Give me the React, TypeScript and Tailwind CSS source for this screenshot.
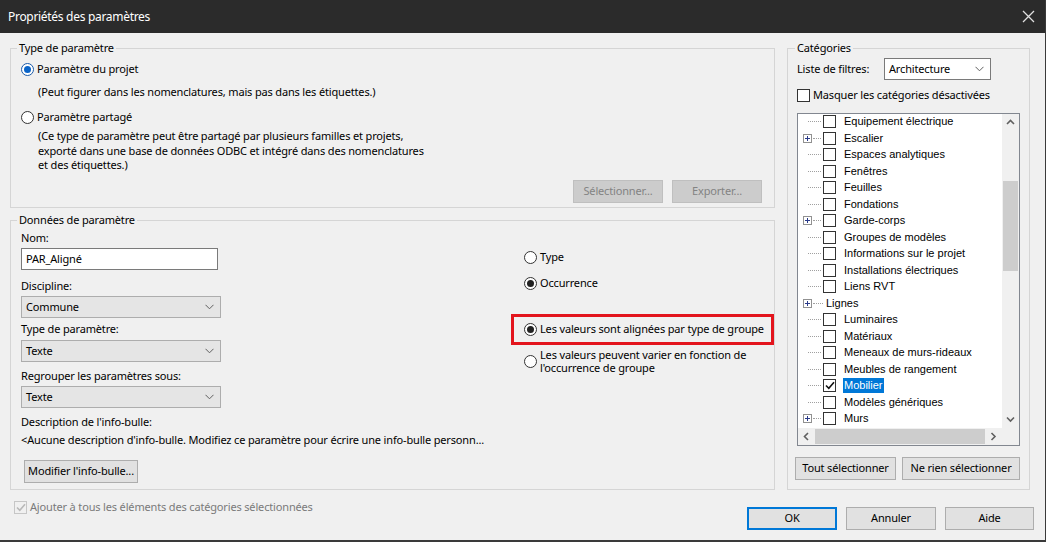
import React from 'react';

const ui = "font-['Noto_Sans',sans-serif] text-[11px] tracking-[-0.16px] text-black";

function Chevron({ className = '' }: { className?: string }) {
  return (
    <svg width="9" height="6" viewBox="0 0 9 6" className={className}>
      <polyline points="0.5,0.8 4.5,4.8 8.5,0.8" fill="none" stroke="#606060" strokeWidth="1" />
    </svg>
  );
}

function Radio({ checked, blue }: { checked?: boolean; blue?: boolean }) {
  return (
    <span
      className={`flex h-[13px] w-[13px] shrink-0 items-center justify-center rounded-full border bg-white ${
        blue ? 'border-[#1a5aa8]' : 'border-[#333333]'
      }`}
    >
      {checked && (
        <span className={`h-[7px] w-[7px] rounded-full ${blue ? 'bg-[#0a64c8]' : 'bg-[#222222]'}`} />
      )}
    </span>
  );
}

function RadioRow({ label, checked, blue }: { label: string; checked?: boolean; blue?: boolean }) {
  return (
    <div className="flex h-[15px] items-center gap-[3px]">
      <Radio checked={checked} blue={blue} />
      <span>{label}</span>
    </div>
  );
}

function Select({ value, className = '', white }: { value: string; className?: string; white?: boolean }) {
  return (
    <div
      className={`flex h-[22px] items-center justify-between border pl-[4px] pr-[6px] ${
        white ? 'border-[#7a7a7a] bg-white' : 'border-[#adadad] bg-[#e5e5e5]'
      } ${className}`}
    >
      <span>{value}</span>
      <Chevron />
    </div>
  );
}

function Button({ label, className = '', disabled, primary }: { label: string; className?: string; disabled?: boolean; primary?: boolean }) {
  return (
    <button
      type="button"
      className={`flex h-[23px] items-center justify-center ${
        disabled
          ? 'border border-[#bfbfbf] bg-[#cccccc] text-[#838383]'
          : primary
          ? 'border-2 border-[#0078d7] bg-[#e1e1e1]'
          : 'border border-[#adadad] bg-[#e1e1e1]'
      } ${className}`}
    >
      {label}
    </button>
  );
}

function CheckBox({ checked, disabled }: { checked?: boolean; disabled?: boolean }) {
  return (
    <span
      className={`flex h-[13px] w-[13px] shrink-0 items-center justify-center border ${
        disabled ? 'border-[#c6c6c6] bg-[#f0f0f0]' : 'border-[#333333] bg-white'
      }`}
    >
      {checked && (
        <svg width="10" height="9" viewBox="0 0 10 9">
          <polyline
            points="1,4.5 3.8,7.3 9,1.3"
            fill="none"
            stroke={disabled ? '#b8b8b8' : '#111111'}
            strokeWidth="1.6"
          />
        </svg>
      )}
    </span>
  );
}

type Cat = { label: string; plus?: boolean; checked?: boolean; selected?: boolean; noBox?: boolean };

const cats: Cat[] = [
  { label: 'Equipement électrique' },
  { label: 'Escalier', plus: true },
  { label: 'Espaces analytiques' },
  { label: 'Fenêtres' },
  { label: 'Feuilles' },
  { label: 'Fondations' },
  { label: 'Garde-corps', plus: true },
  { label: 'Groupes de modèles' },
  { label: 'Informations sur le projet' },
  { label: 'Installations électriques' },
  { label: 'Liens RVT' },
  { label: 'Lignes', plus: true, noBox: true },
  { label: 'Luminaires' },
  { label: 'Matériaux' },
  { label: 'Meneaux de murs-rideaux' },
  { label: 'Meubles de rangement' },
  { label: 'Mobilier', checked: true, selected: true },
  { label: 'Modèles génériques' },
  { label: 'Murs', plus: true },
];

function PlusBox() {
  return (
    <span className="flex h-[9px] w-[9px] shrink-0 items-center justify-center border border-[#919191] bg-white">
      <svg width="7" height="7" viewBox="0 0 7 7">
        <path d="M1 3.5h5M3.5 1v5" stroke="#2a3b8a" strokeWidth="1" />
      </svg>
    </span>
  );
}

function TreeRow({ c }: { c: Cat }) {
  return (
    <div className="flex h-[16.5px] items-center pl-[5px]">
      <div className="flex w-[9px] justify-center">{c.plus ? <PlusBox /> : null}</div>
      {c.noBox ? (
        <>
          <span className="ml-[1px] w-[10px] border-t border-dotted border-[#a0a0a0]" />
          <span className="ml-[3px] text-black">{c.label}</span>
        </>
      ) : (
        <>
          <span className={`${c.plus ? 'ml-[1px] w-[8px]' : 'ml-[-4px] w-[13px]'} border-t border-dotted border-[#a0a0a0]`} />
          <span className="ml-[2px]">
            <CheckBox checked={c.checked} />
          </span>
          <span
            className={`ml-[7px] px-[1px] leading-[15px] ${c.selected ? 'bg-[#0078d7] text-white' : 'text-black'}`}
          >
            {c.label}
          </span>
        </>
      )}
    </div>
  );
}

function Arrow({ dir }: { dir: 'up' | 'down' | 'left' | 'right' }) {
  const pts = {
    up: '1,5 4.5,1.5 8,5',
    down: '1,1.5 4.5,5 8,1.5',
    left: '5,1 1.5,4.5 5,8',
    right: '1.5,1 5,4.5 1.5,8',
  }[dir];
  const horiz = dir === 'left' || dir === 'right';
  return (
    <svg width={horiz ? 7 : 9} height={horiz ? 9 : 7} viewBox={horiz ? '0 0 7 9' : '0 0 9 7'}>
      <polyline points={pts} fill="none" stroke="#606060" strokeWidth="1.6" />
    </svg>
  );
}

function Tree() {
  return (
    <div className="flex h-[333px] flex-col border border-[#828790] bg-white font-['Liberation_Sans',Arial,sans-serif] text-[11px] tracking-normal">
      <div className="flex min-h-0 flex-1">
        <div className="flex-1 overflow-hidden">
          {cats.map((c) => (
            <TreeRow key={c.label} c={c} />
          ))}
        </div>
        <div className="flex w-[17px] flex-col bg-[#f0f0f0]">
          <div className="flex h-[17px] items-center justify-center">
            <Arrow dir="up" />
          </div>
          <div className="flex flex-1 flex-col px-[1px]">
            <div className="h-[50px]" />
            <div className="h-[90px] bg-[#cdcdcd]" />
          </div>
          <div className="flex h-[17px] items-center justify-center">
            <Arrow dir="down" />
          </div>
        </div>
      </div>
      <div className="flex h-[17px]">
        <div className="flex flex-1 bg-[#f0f0f0]">
          <div className="flex w-[17px] items-center justify-center">
            <Arrow dir="left" />
          </div>
          <div className="flex flex-1 items-center">
            <div className="h-[15px] w-[170px] bg-[#cdcdcd]" />
          </div>
          <div className="flex w-[17px] items-center justify-center">
            <Arrow dir="right" />
          </div>
        </div>
        <div className="w-[17px] bg-[#f0f0f0]" />
      </div>
    </div>
  );
}

export default function App() {
  return (
    <div className={`flex h-[542px] w-[1046px] flex-col overflow-hidden border-r border-b-2 border-[#3a3a3a] bg-[#f0f0f0] ${ui}`}>
      {/* title bar */}
      <div className="flex h-[33px] shrink-0 items-center justify-between bg-[#2b2b2b] pl-[8px] pr-[10px] text-[12px] tracking-[-0.3px] text-white">
        <span>Propriétés des paramètres</span>
        <svg width="13" height="13" viewBox="0 0 13 13">
          <path d="M1 1l11 11M12 1L1 12" stroke="#e0e0e0" strokeWidth="1.3" />
        </svg>
      </div>

      <div className="flex gap-[12px] pl-[10px] pt-[7px]">
        {/* left column */}
        <div className="flex w-[765px] flex-col gap-[4px]">
          <fieldset className="h-[168px] border border-[#d5d5d5] px-[10px]">
            <legend className="ml-[-4px] px-[2px] leading-[16px]">Type de paramètre</legend>
            <div className="mt-[6px]">
              <RadioRow label="Paramètre du projet" checked blue />
            </div>
            <div className="mt-[7px] pl-[17px] leading-[15px]">
              (Peut figurer dans les nomenclatures, mais pas dans les étiquettes.)
            </div>
            <div className="mt-[11px]">
              <RadioRow label="Paramètre partagé" />
            </div>
            <div className="mt-[4px] pl-[17px] leading-[14.5px]">
              (Ce type de paramètre peut être partagé par plusieurs familles et projets,
              <br />
              exporté dans une base de données ODBC et intégré dans des nomenclatures
              <br />
              et des étiquettes.)
            </div>
            <div className="mt-[7px] flex justify-end gap-[9px] pr-[2px]">
              <Button label="Sélectionner..." disabled className="w-[90px]" />
              <Button label="Exporter..." disabled className="w-[90px]" />
            </div>
          </fieldset>

          <fieldset className="h-[278px] border border-[#d5d5d5] pl-[10px]">
            <legend className="ml-[-4px] px-[2px] leading-[16px]">Données de paramètre</legend>
            <div className="flex">
              <div className="flex w-[480px] flex-col">
                <div className="mt-[2px] leading-[15px]">Nom:</div>
                <div className="mt-[3px] flex h-[22px] w-[197px] items-center border border-[#7a7a7a] bg-white pl-[4px]">
                  PAR_Aligné
                </div>
                <div className="mt-[8px] leading-[15px]">Discipline:</div>
                <Select value="Commune" className="mt-[3px] w-[200px]" />
                <div className="mt-[3px] leading-[15px]">Type de paramètre:</div>
                <Select value="Texte" className="mt-[4px] w-[200px]" />
                <div className="mt-[6px] leading-[15px]">Regrouper les paramètres sous:</div>
                <Select value="Texte" className="mt-[3px] w-[200px]" />
                <div className="mt-[6px] leading-[15px]">Description de l'info-bulle:</div>
                <div className="mt-[3px] whitespace-nowrap leading-[15px]">
                  &lt;Aucune description d'info-bulle. Modifiez ce paramètre pour écrire une info-bulle personn...
                </div>
                <Button label="Modifier l'info-bulle..." className="ml-[3px] mt-[13px] w-[114px]" />
              </div>
              <div className="ml-[10px] flex flex-1 flex-col">
                <div className="ml-[13px] mt-[22px]">
                  <RadioRow label="Type" />
                </div>
                <div className="ml-[13px] mt-[11px]">
                  <RadioRow label="Occurrence" checked />
                </div>
                <div className="mt-[23px] flex h-[31px] items-center border-[3px] border-[#e3151d] pl-[10px]">
                  <RadioRow label="Les valeurs sont alignées par type de groupe" checked />
                </div>
                <div className="ml-[13px] mt-[3px] flex items-center gap-[3px]">
                  <Radio />
                  <span className="leading-[13px]">
                    Les valeurs peuvent varier en fonction de
                    <br />
                    l'occurrence de groupe
                  </span>
                </div>
              </div>
            </div>
          </fieldset>
        </div>

        {/* right column */}
        <fieldset className="h-[450px] w-[243px] border border-[#d5d5d5] px-[9px]">
          <legend className="ml-[-2px] px-[2px] leading-[16px]">Catégories</legend>
          <div className="mt-[2px] flex items-center">
            <span className="w-[87px]">Liste de filtres:</span>
            <Select value="Architecture" white className="w-[107px]" />
          </div>
          <div className="mt-[7px] flex items-center gap-[3px]">
            <CheckBox />
            <span>Masquer les catégories désactivées</span>
          </div>
          <div className="mt-[9px]">
            <Tree />
          </div>
          <div className="mt-[11px] flex justify-between">
            <Button label="Tout sélectionner" className="ml-[-2px] w-[101px]" />
            <Button label="Ne rien sélectionner" className="w-[118px]" />
          </div>
        </fieldset>
      </div>

      {/* bottom row */}
      <div className="mt-[10px] flex items-start justify-between pl-[14px] pr-[11px]">
        <div className="flex h-[15px] items-center gap-[3px] text-[#7a7a7a]">
          <CheckBox checked disabled />
          <span>Ajouter à tous les éléments des catégories sélectionnées</span>
        </div>
        <div className="mt-[7px] flex gap-[9px]">
          <Button label="OK" primary className="w-[90px]" />
          <Button label="Annuler" className="w-[90px]" />
          <Button label="Aide" className="w-[89px]" />
        </div>
      </div>
    </div>
  );
}
